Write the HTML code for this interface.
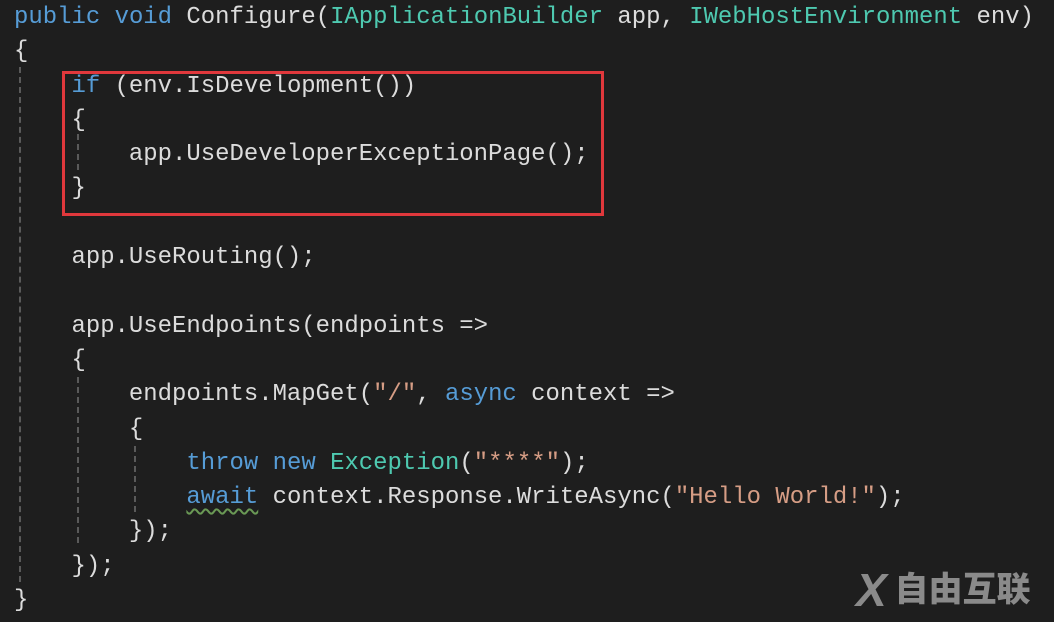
<!DOCTYPE html>
<html><head><meta charset="utf-8"><style>
html,body{margin:0;padding:0;background:#1e1e1e;width:1054px;height:622px;overflow:hidden}
#c{position:absolute;left:14px;top:1px;margin:0;font-family:"Liberation Mono",monospace;font-size:23.95px;line-height:34.3px;color:#dcdcdc;white-space:pre}
.k{color:#569cd6}.t{color:#4ec9b0}.s{color:#d69d85}
.sq{text-decoration:underline wavy #6a9955;text-underline-offset:5px;text-decoration-thickness:1.5px}
.g{position:absolute;width:0;border-left:2px dashed #5a5a5a}
#box{position:absolute;left:62px;top:71px;width:536px;height:139px;border:3px solid #e0383c}
#logo{position:absolute;left:856px;top:558px;color:#8a8a8a;font-family:"Noto Sans CJK SC",sans-serif;font-weight:900;font-size:34px;letter-spacing:0px;white-space:nowrap}
</style></head><body>
<div class="g" style="left:19px;top:67px;height:515px"></div>
<div class="g" style="left:77px;top:134px;height:36px"></div>
<div class="g" style="left:77px;top:377px;height:166px"></div>
<div class="g" style="left:134px;top:446px;height:66px"></div>
<pre id="c"><span class="k">public</span> <span class="k">void</span> Configure(<span class="t">IApplicationBuilder</span> app, <span class="t">IWebHostEnvironment</span> env)
{
    <span class="k">if</span> (env.IsDevelopment())
    {
        app.UseDeveloperExceptionPage();
    }

    app.UseRouting();

    app.UseEndpoints(endpoints =&gt;
    {
        endpoints.MapGet(<span class="s">"/"</span>, <span class="k">async</span> context =&gt;
        {
            <span class="k">throw</span> <span class="k">new</span> <span class="t">Exception</span>(<span class="s">"****"</span>);
            <span class="k sq">await</span> context.Response.WriteAsync(<span class="s">"Hello World!"</span>);
        });
    });
}</pre>
<div id="box"></div>
<div id="logo"><span style="font-family:'Liberation Sans',sans-serif;font-style:italic;font-size:46px;position:relative;top:5px">X</span> 自由互联</div>
</body></html>
